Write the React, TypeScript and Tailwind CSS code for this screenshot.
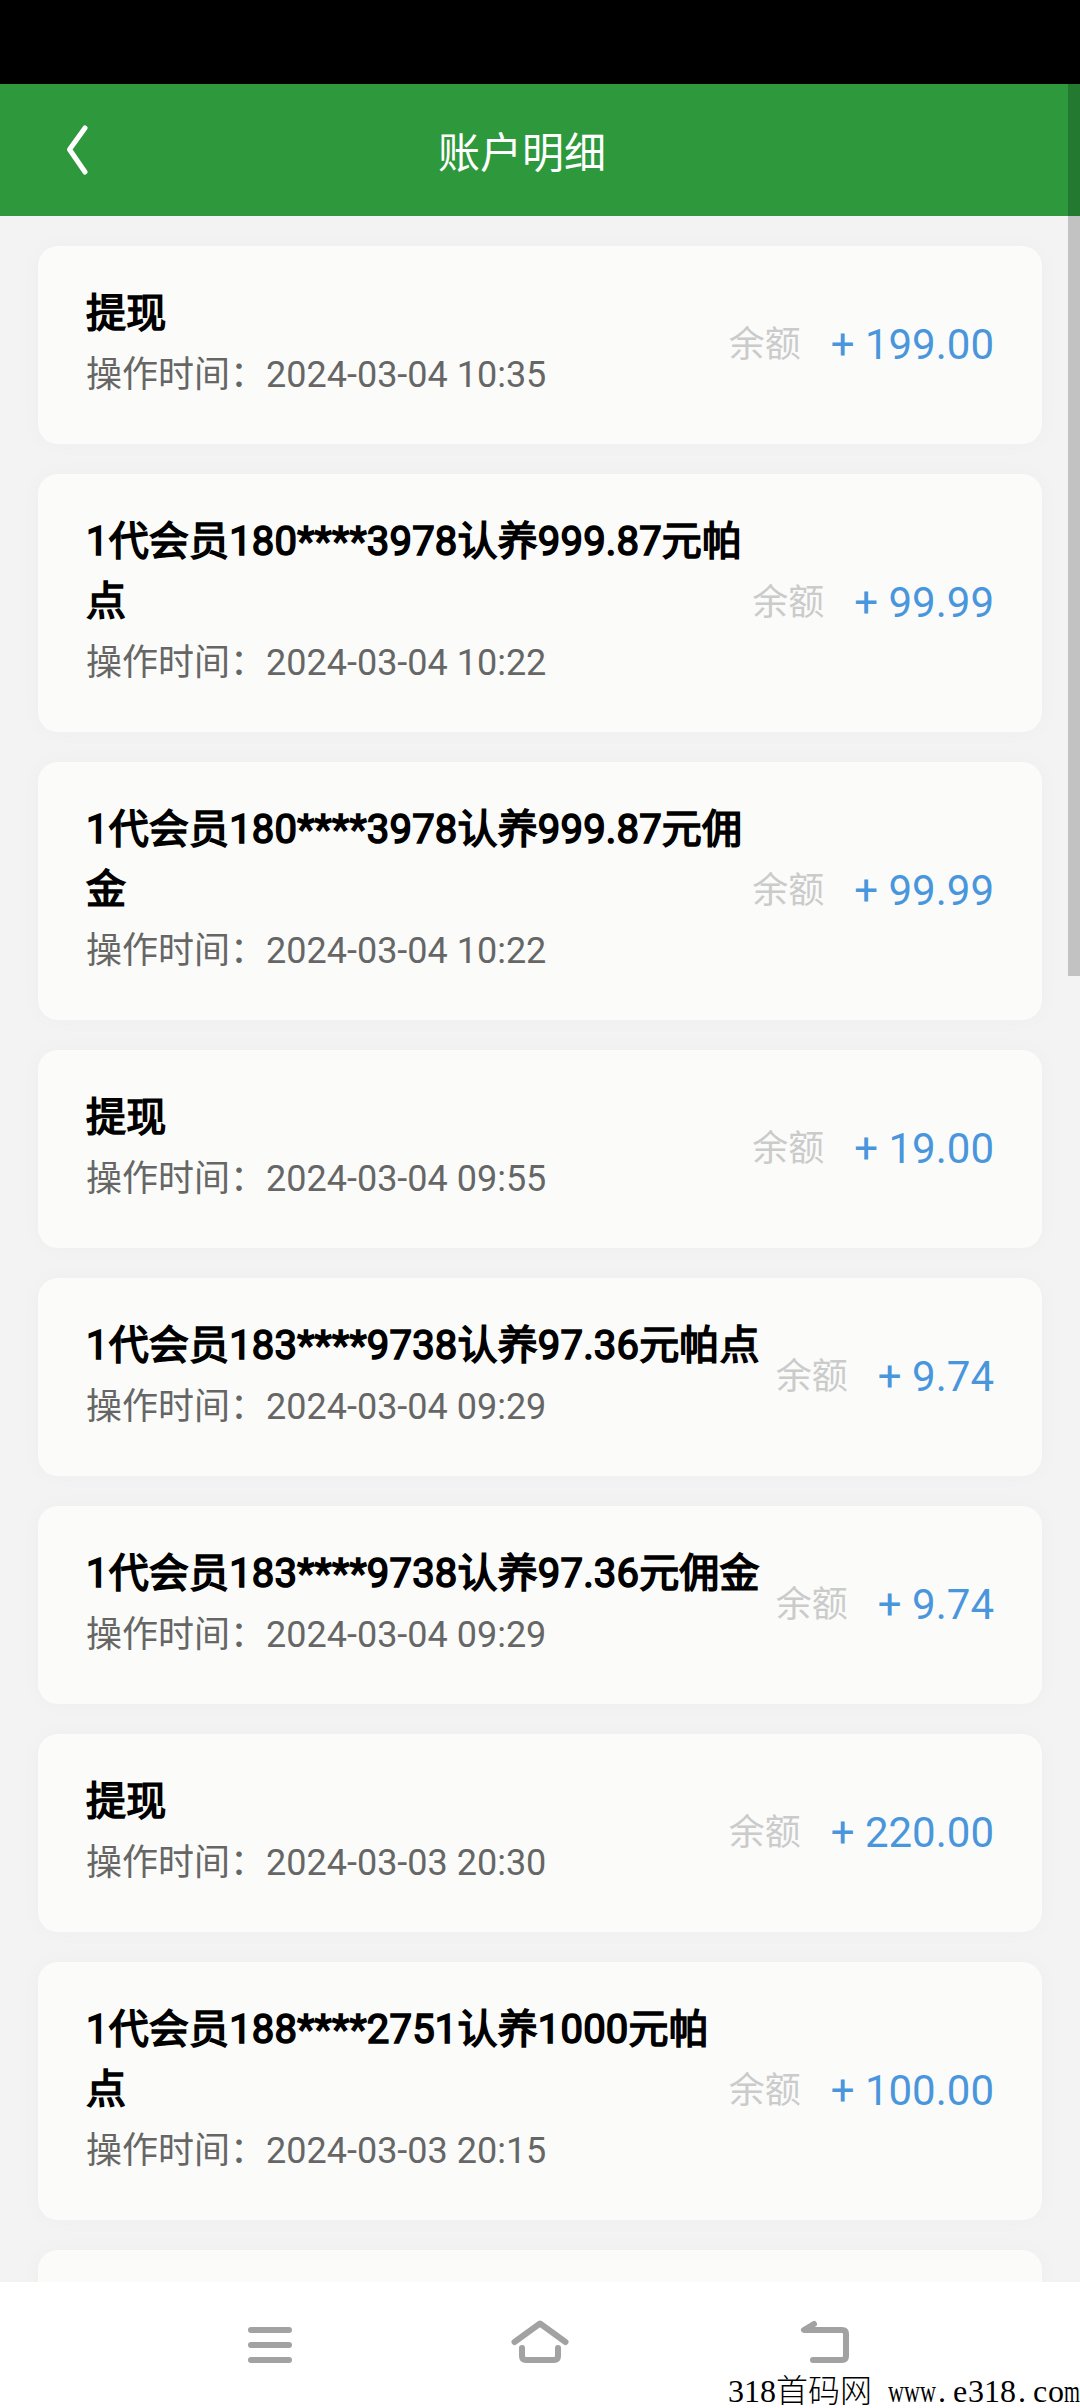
import React from 'react';

interface AccountRecord {
  id: number;
  title: string;
  time: string;
  amount: string;
}

const records: AccountRecord[] = [
  { id: 1, title: '提现', time: '2024-03-04 10:35', amount: '199.00' },
  { id: 2, title: '1代会员180****3978认养999.87元帕点', time: '2024-03-04 10:22', amount: '99.99' },
  { id: 3, title: '1代会员180****3978认养999.87元佣金', time: '2024-03-04 10:22', amount: '99.99' },
  { id: 4, title: '提现', time: '2024-03-04 09:55', amount: '19.00' },
  { id: 5, title: '1代会员183****9738认养97.36元帕点', time: '2024-03-04 09:29', amount: '9.74' },
  { id: 6, title: '1代会员183****9738认养97.36元佣金', time: '2024-03-04 09:29', amount: '9.74' },
  { id: 7, title: '提现', time: '2024-03-03 20:30', amount: '220.00' },
  { id: 8, title: '1代会员188****2751认养1000元帕点', time: '2024-03-03 20:15', amount: '100.00' }
];

const Header: React.FC = () => (
  <header className="flex h-[132px] shrink-0 items-center bg-[#2e983c] text-white">
    <button type="button" className="flex w-[156px] pl-[65px]">
      <svg width="24" height="52" viewBox="0 0 24 52" fill="none">
        <path d="M20 4L4.500 25.500L20 48" stroke="currentColor" strokeWidth="5" strokeLinecap="round" strokeLinejoin="round" />
      </svg>
    </button>
    <h1 className="flex-1 pt-2 pr-48 text-center text-[42px] leading-[60px] font-normal">账户明细</h1>
  </header>
);

const RecordCard: React.FC<{ record: AccountRecord }> = ({ record }) => (
  <li className="flex items-center rounded-[20px] bg-[#fbfcfa] px-12 shadow-[0_0_24px_rgba(0,0,20,0.025)]">
    <div className="min-w-0 flex-1 pt-[38px] pb-[39px]">
      <h2 className="text-[40px] leading-[60px] font-normal tracking-[0.18px] break-all text-black [-webkit-text-stroke:1.6px_black]">
        {record.title}
      </h2>
      <p className="pt-px text-[36px] leading-[60px] text-[#666]">操作时间：{record.time}</p>
    </div>
    <div className="flex shrink-0 items-center gap-[30px] pb-px whitespace-nowrap">
      <span className="text-[36px] leading-[60px] text-[#cbcbcb]">余额</span>
      <span className="text-[42px] leading-[60px] text-[#4a96dc]">+ {record.amount}</span>
    </div>
  </li>
);

const NavBar: React.FC = () => (
  <nav className="relative h-[126px] shrink-0 bg-white text-[#a2a2a2]">
    <div className="flex pt-[34px] pl-60">
      <svg width="60" height="52" viewBox="0 0 60 52" fill="none" stroke="currentColor" strokeWidth="6" strokeLinecap="round">
        <path d="M11 14H49M11 29H49M11 44H49" />
      </svg>
      <svg width="60" height="52" viewBox="0 0 60 52" fill="none" stroke="currentColor" strokeWidth="6" strokeLinecap="round" strokeLinejoin="round" className="ml-[210px]">
        <path d="M4.500 26L30 7.500L55.500 26" />
        <path d="M12 32V40Q12 44 16 44H44Q48 44 48 40V32" />
      </svg>
      <svg width="60" height="52" viewBox="0 0 60 52" fill="none" stroke="currentColor" strokeWidth="6" strokeLinecap="round" strokeLinejoin="round" className="ml-[225px]">
        <path d="M19 8L9 14H47Q51 14 51 18V40Q51 44 47 44H18" />
      </svg>
    </div>
    <p className="absolute right-0 bottom-0 flex w-[352px] font-['Liberation_Serif','Noto_Sans_CJK_SC',serif] text-[32px] leading-[33px] whitespace-pre text-black">
      <span>318</span>
      <span className="font-light">首码网</span>
      <span className="ml-4 w-12 origin-left scale-x-[0.69]">www</span>
      <span className="w-4 pl-0.5">.</span>
      <span className="w-4 pl-px">e</span>
      <span>318</span>
      <span className="w-4 pl-0.5">.</span>
      <span className="w-4 pl-px">c</span>
      <span className="w-4">o</span>
      <span className="w-4 origin-left scale-x-[0.64]">m</span>
    </p>
  </nav>
);

export default function App() {
  return (
    <div className="relative flex h-[2408px] w-[1080px] flex-col overflow-hidden bg-[#f3f3f3] font-[Roboto,'Noto_Sans_CJK_SC',sans-serif]">
      <div className="h-[84px] shrink-0 bg-black" />
      <Header />
      <main className="min-h-0 flex-1 overflow-hidden px-[38px] pt-[30px]">
        <ul className="flex flex-col gap-[30px]">
          {records.map((record) => (
            <RecordCard key={record.id} record={record} />
          ))}
          <li className="h-[198px] rounded-[20px] bg-[#fbfcfa] shadow-[0_0_24px_rgba(0,0,20,0.025)]" />
        </ul>
      </main>
      <NavBar />
      {/* scroll thumb */}
      <div className="absolute top-[84px] right-0 h-[892px] w-3 bg-black/20" />
    </div>
  );
}
